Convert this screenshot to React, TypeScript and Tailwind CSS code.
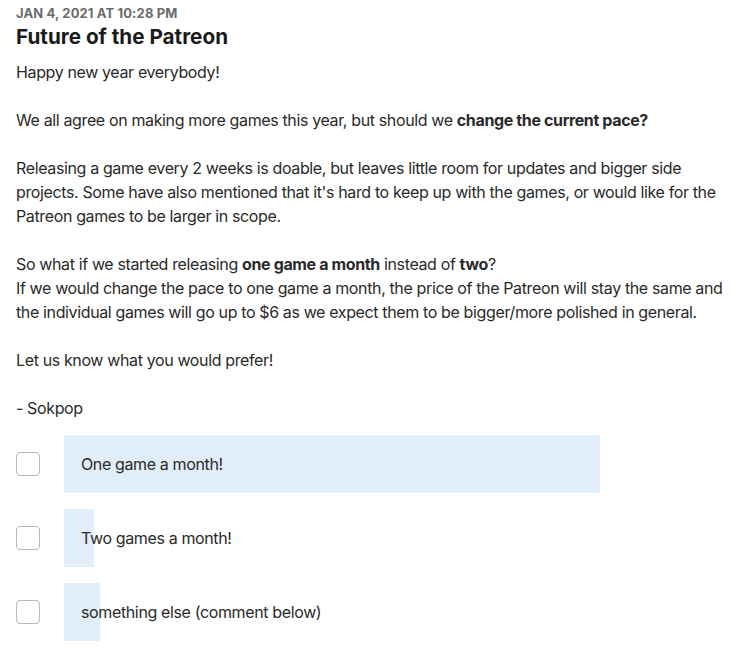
import React from "react";

const options = [
  { label: "One game a month!", width: 536 },
  { label: "Two games a month!", width: 30 },
  { label: "something else (comment below)", width: 36 },
];

export default function App() {
  return (
    <div
      className="min-h-[655px] bg-white pl-4 pr-2 pt-[5px] text-[#241e12]"
      style={{ fontFamily: "Inter, 'Liberation Sans', sans-serif" }}
    >
      <div className="text-[13px] font-bold leading-[16px] tracking-[0.01em] text-[#6b6b6b]">
        JAN 4, 2021 AT 10:28 PM
      </div>
      <h1 className="mt-[2px] text-[20.7px] font-bold leading-[28px] text-[#1b1b1b]">
        Future of the Patreon
      </h1>
      <div className="mt-[9px] flex flex-col gap-6 text-[16px] leading-[24px] tracking-[-0.023em] text-[#2a2a2a]">
        <p>Happy new year everybody!</p>
        <p>
          We all agree on making more games this year, but should we{" "}
          <strong className="font-bold">change the current pace?</strong>
        </p>
        <p>
          Releasing a game every 2 weeks is doable, but leaves little room for updates and bigger side
          <br />
          projects. Some have also mentioned that it's hard to keep up with the games, or would like for the
          <br />
          Patreon games to be larger in scope.
        </p>
        <p>
          So what if we started releasing <strong className="font-bold">one game a month</strong> instead of{" "}
          <strong className="font-bold">two</strong>?
          <br />
          If we would change the pace to one game a month, the price of the Patreon will stay the same and
          <br />
          the individual games will go up to $6 as we expect them to be bigger/more polished in general.
        </p>
        <p>Let us know what you would prefer!</p>
        <p>- Sokpop</p>
      </div>
      <div className="mt-[15px] flex flex-col gap-4">
        {options.map((o) => (
          <div key={o.label} className="flex items-center">
            <div className="h-6 w-6 shrink-0 rounded-[4px] border border-[#b8b8b8] bg-white" />
            <div className="relative ml-6 flex h-[58px] flex-1 items-center">
              <div
                className="absolute left-0 top-0 h-full bg-[#e1edf8]"
                style={{ width: o.width }}
              />
              <span className="relative pl-[17px] text-[16px] tracking-[-0.023em] text-[#2a2a2a]">
                {o.label}
              </span>
            </div>
          </div>
        ))}
      </div>
    </div>
  );
}
